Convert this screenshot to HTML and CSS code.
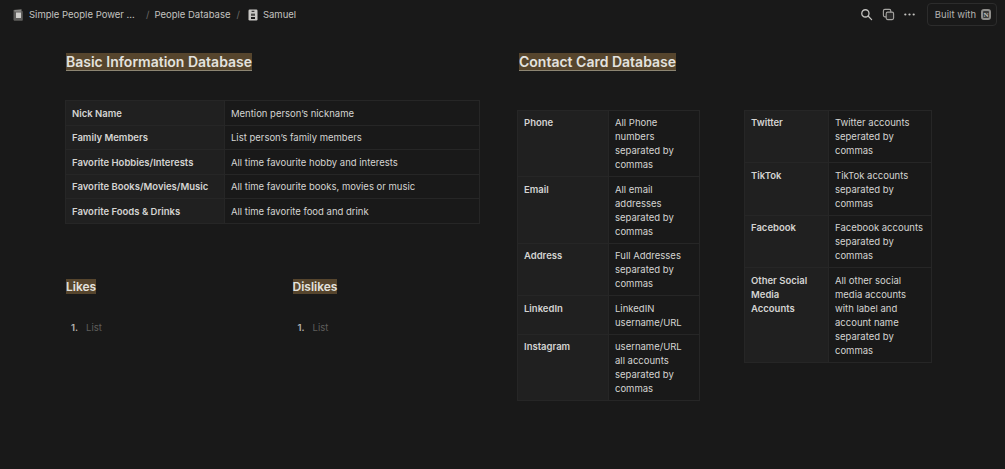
FILE: index.html
```html
<!DOCTYPE html>
<html lang="en">
<head>
    <meta charset="UTF-8">
    <title>Samuel</title>
    <link rel="stylesheet" href="styles.css">
</head>
<body>
    <header class="topbar">
        <nav class="crumbs">
            <svg class="crumb-icon" viewBox="0 0 12 14" width="12" height="14">
                <path d="M1.5 2 8.8 1c.6-.1 1 .3 1 .9V3h.2c.5 0 .8.3.8.8v8c0 .6-.4 1-1 1H3c-.9 0-1.5-.5-1.5-1.3z" fill="#5e5d5b"/>
                <rect x="2.5" y="2.4" width="6.5" height="1" fill="#a5a4a1"/>
                <rect x="4" y="4.5" width="5" height="5.5" fill="#cfcecb"/>
            </svg>
            <span class="crumb-first">Simple People Power ...</span>
            <span class="slash first-slash">/</span>
            <span>People Database</span>
            <span class="slash second-slash">/</span>
            <svg class="crumb-icon samuel-icon" viewBox="0 0 12 12" width="12" height="12">
                <rect x="1.5" y="0.5" width="9" height="11" rx="1.2" fill="#c9c8c5"/>
                <rect x="4.6" y="1.8" width="2.8" height="1" fill="#191919"/>
                <rect x="4" y="4.6" width="4" height="2.2" fill="#4a4a48"/>
                <rect x="4" y="8" width="4" height="2" fill="#191919"/>
            </svg>
            <span>Samuel</span>
        </nav>
        <div class="actions">
            <svg viewBox="0 0 14 14" width="13" height="13" fill="none" stroke="#c4c3c0" stroke-width="1.4">
                <circle cx="5.8" cy="5.8" r="3.9"/>
                <path d="m8.7 8.7 3.8 3.8" stroke-linecap="round"/>
            </svg>
            <svg viewBox="0 0 14 14" width="13" height="13" fill="none" stroke="#a5a4a1" stroke-width="1.2">
                <rect x="1.5" y="1.5" width="8" height="8" rx="1.6"/>
                <rect x="4.5" y="4.5" width="8" height="8" rx="1.6" fill="#2a2a2a"/>
            </svg>
            <svg viewBox="0 0 14 14" width="13" height="13" fill="#c4c3c0">
                <circle cx="2.5" cy="7" r="1.2"/>
                <circle cx="7" cy="7" r="1.2"/>
                <circle cx="11.5" cy="7" r="1.2"/>
            </svg>
            <div class="built">
                Built with
                <span class="notion-logo">N</span>
            </div>
        </div>
    </header>

    <main class="page">
        <section class="left-col">
            <h2 class="title"><mark>Basic Information Database</mark></h2>
            <table class="info-table">
                <tr><th>Nick Name</th><td>Mention person’s nickname</td></tr>
                <tr><th>Family Members</th><td>List person’s family members</td></tr>
                <tr><th>Favorite Hobbies/Interests</th><td>All time favourite hobby and interests</td></tr>
                <tr><th>Favorite Books/Movies/Music</th><td>All time favourite books, movies or music</td></tr>
                <tr><th>Favorite Foods &amp; Drinks</th><td>All time favorite food and drink</td></tr>
            </table>
            <div class="lists">
                <div class="list-col">
                    <h3 class="subtitle"><mark>Likes</mark></h3>
                    <div class="list-row"><b>1.</b><span>List</span></div>
                </div>
                <div class="list-col">
                    <h3 class="subtitle"><mark>Dislikes</mark></h3>
                    <div class="list-row"><b>1.</b><span>List</span></div>
                </div>
            </div>
        </section>

        <section class="right-col">
            <h2 class="title contact-title"><mark>Contact Card Database</mark></h2>
            <div class="contact-tables">
                <table class="contact-table phone-table">
                    <tr><th>Phone</th><td>All Phone numbers separated by commas</td></tr>
                    <tr><th>Email</th><td>All email addresses separated by commas</td></tr>
                    <tr><th>Address</th><td>Full Addresses separated by commas</td></tr>
                    <tr><th>LinkedIn</th><td>LinkedIN username/URL</td></tr>
                    <tr><th>Instagram</th><td>username/URL all accounts separated by commas</td></tr>
                </table>
                <table class="contact-table social-table">
                    <tr><th>Twitter</th><td>Twitter accounts seperated by commas</td></tr>
                    <tr><th>TikTok</th><td>TikTok accounts separated by commas</td></tr>
                    <tr><th>Facebook</th><td>Facebook accounts separated by commas</td></tr>
                    <tr><th>Other Social Media Accounts</th><td>All other social media accounts with label and account name separated by commas</td></tr>
                </table>
            </div>
        </section>
    </main>
</body>
</html>
```

FILE: styles.css
```css
body {
    margin: 0;
    height: 469px;
    overflow: hidden;
    background-color: #191919;
    color: #d4d4d2;
    font-family: Inter, "Liberation Sans", sans-serif;
    font-size: 9.5px;
    line-height: 14px;
}
.topbar {
    display: flex;
    justify-content: space-between;
    align-items: center;
    height: 29px;
    padding: 0 8px 0 12px;
}
.crumbs {
    display: flex;
    align-items: center;
    color: #c4c3c0;
}
.crumb-first {
    margin-left: 5px;
    width: 106px;
    white-space: nowrap;
}
.slash {
    margin: 0 5px;
    color: #6b6a68;
}
.first-slash {
    margin: 0 5px 0 11px;
}
.second-slash {
    margin-left: 6px;
}
.samuel-icon {
    margin: 0 4px 0 2px;
}
.actions {
    display: flex;
    align-items: center;
    gap: 8.5px;
}
.built {
    display: flex;
    align-items: center;
    gap: 5px;
    height: 21px;
    margin-left: 2px;
    padding: 0 5px 0 7px;
    border: 1px solid #2c2c2c;
    border-radius: 4px;
    color: #b5b4b1;
}
.notion-logo {
    display: flex;
    justify-content: center;
    align-items: center;
    box-sizing: border-box;
    width: 10px;
    height: 11px;
    border: 2px solid #8f8e8b;
    border-radius: 3px;
    background: #3a3a39;
    color: #c4c3c0;
    font-family: "Liberation Serif", serif;
    font-size: 7px;
    font-weight: bold;
}
.page {
    display: flex;
    gap: 37px;
    padding: 23px 0 0 65px;
}
.left-col {
    width: 415px;
}
.title {
    margin: 0;
    padding-left: 1px;
    font-size: 14px;
    font-weight: 600;
    line-height: 19px;
}
.contact-title {
    padding-left: 2px;
}
mark {
    background: #56452d;
    color: #e3e2df;
    border-bottom: 1px solid #8c8572;
}
.info-table, .contact-table {
    border-collapse: collapse;
    background: #191919;
}
th, td {
    padding: 5.5px 6px 4px;
    border: 1px solid #262626;
    text-align: left;
    vertical-align: top;
    font-weight: 400;
}
th {
    background: #202020;
    font-weight: 600;
}
.info-table {
    width: 415px;
    margin-top: 29px;
    table-layout: fixed;
}
.info-table th {
    width: 146px;
    white-space: nowrap;
}
.lists {
    display: flex;
    margin-top: 55px;
}
.list-col {
    flex: none;
    width: 226.5px;
    padding-left: 1px;
    box-sizing: border-box;
}
.subtitle {
    margin: 0;
    font-size: 12px;
    font-weight: 600;
    line-height: 16px;
}
.subtitle mark {
    border-bottom: 0;
}
.list-row {
    display: flex;
    gap: 8px;
    margin-top: 26px;
    padding-left: 5px;
}
.list-row b {
    font-weight: 600;
    color: #b5b4b1;
}
.list-row span {
    color: #5f5e5c;
}
.contact-tables {
    display: flex;
    align-items: flex-start;
    gap: 44px;
    margin-top: 38.5px;
}
.contact-table {
    table-layout: fixed;
}
.phone-table {
    width: 183px;
}
.phone-table th {
    width: 78px;
}
.social-table {
    width: 188px;
}
.social-table th {
    width: 71px;
}
```
